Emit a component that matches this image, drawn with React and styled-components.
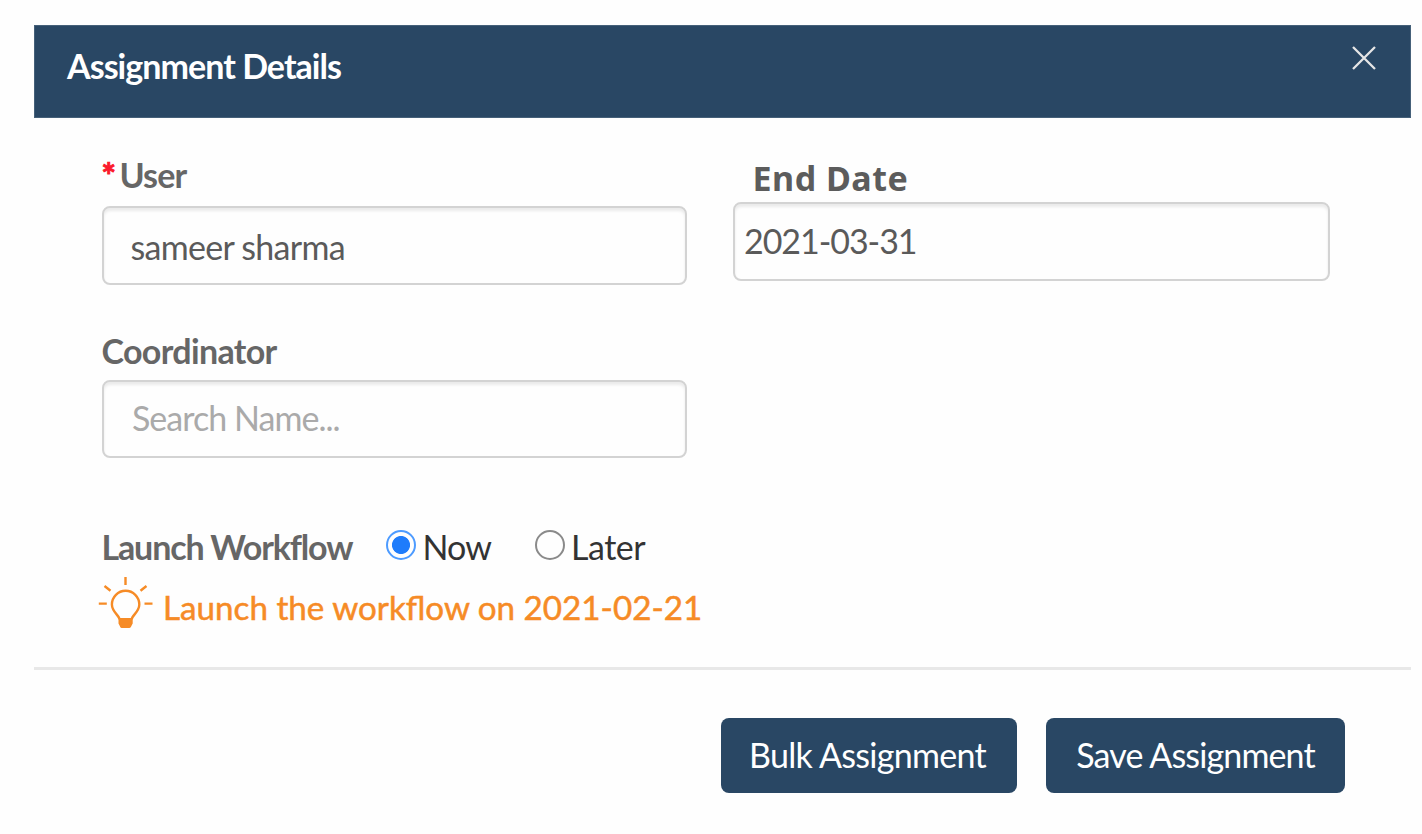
import React, { useState } from "react";
import styled, { createGlobalStyle } from "styled-components";

const GlobalStyle = createGlobalStyle`
  * { box-sizing: border-box; }
  body {
    margin: 0;
    background: #fefefe;
    font-family: Lato, "Open Sans", sans-serif;
    font-size: 34px;
    line-height: 40px;
    color: #333;
    overflow: hidden;
  }
`;

const Dialog = styled.section`
  width: 1377px;
  margin: 25px 0 0 34px;
`;

const Header = styled.header`
  display: flex;
  justify-content: space-between;
  align-items: flex-start;
  height: 93px;
  padding: 20px 34px 0 32px;
  background: #294764;
  border: 1px solid #456079;
  color: #fff;
`;

const Title = styled.h1`
  margin: 0;
  font-size: 34px;
  font-weight: 700;
  letter-spacing: ${(p) => p.$tracking}px;
`;

const CloseButton = styled.button`
  display: flex;
  padding: 0;
  border: 0;
  background: none;
  color: #e6e6e6;
`;

const Body = styled.div`
  display: flex;
  flex-direction: column;
  height: 549px;
  padding: 37px 81px 0 67.5px;
`;

const Columns = styled.div`
  display: flex;
  gap: 46px;
`;

const Column = styled.div`
  width: ${(p) => p.$width}px;
`;

const Label = styled.label`
  display: flex;
  height: 40px;
  color: #666;
  font-weight: 700;
  white-space: nowrap;
  letter-spacing: ${(p) => p.$tracking}px;
`;

const DateLabel = styled(Label)`
  height: 47px;
  padding: 3px 0 0 20px;
  font-family: "Noto Sans", sans-serif;
  color: #5c5c5c;
`;

const Required = styled.span`
  width: 18px;
  color: #fb1a2c;
  -webkit-text-stroke: 1px #fb1a2c;
`;

const Input = styled.input`
  display: block;
  width: 100%;
  height: ${(p) => p.$height || 79}px;
  margin-top: ${(p) => p.$gap || 0}px;
  padding: ${(p) => p.$pad};
  border: 2px solid #d3d3d3;
  border-radius: 8px;
  outline: 0;
  background: #fefefe;
  box-shadow: inset 0 3px 3px rgba(0, 0, 0, 0.08);
  color: #5a5a5a;
  font: 400 34px/40px Lato, sans-serif;
  letter-spacing: ${(p) => p.$tracking}px;
  &::placeholder { color: #aaa; opacity: 1; }
`;

const Spacer = styled.div`
  height: 46px;
`;

const LaunchRow = styled.div`
  display: flex;
  height: 40px;
  margin-top: 69px;
`;

const LaunchLabel = styled(Label)`
  width: 284.5px;
`;

const Choice = styled.label`
  display: flex;
  width: ${(p) => p.$width}px;
  letter-spacing: ${(p) => p.$tracking}px;
  white-space: nowrap;
`;

const Radio = styled.input`
  appearance: none;
  flex: none;
  width: 30px;
  height: 30px;
  margin: 3px 6.5px 0 0;
  border: 2px solid #8a8a8a;
  border-radius: 50%;
  background: #fefefe;
  &:checked {
    border-color: #4d9bff;
    background: radial-gradient(circle, #1f7cfb 8.6px, #fefefe 9.4px);
  }
`;

const Hint = styled.div`
  display: flex;
  height: 52px;
  margin-top: 10px;
  margin-left: -3.5px;
  color: #f68b26;
  white-space: nowrap;
`;

const HintText = styled.span`
  margin: 10px 0 0 10px;
  font-size: 33.2px;
  -webkit-text-stroke: 0.5px #f68b26;
`;

const Footer = styled.footer`
  display: flex;
  justify-content: flex-end;
  gap: 29px;
  padding: 48px 66px 0 0;
  border-top: 3px solid #e8e8e8;
`;

const Button = styled.button`
  width: ${(p) => p.$width}px;
  height: 75px;
  padding: 0 ${(p) => p.$shift || 0}px 1px 0;
  border: 0;
  border-radius: 8px;
  background: #294764;
  color: #fff;
  font: 400 34px/40px Lato, sans-serif;
  letter-spacing: ${(p) => p.$tracking}px;
  white-space: nowrap;
`;

const CloseIcon = () => (
  <svg width="24" height="24" viewBox="0 0 24 24" fill="none" stroke="currentColor" strokeWidth="2.3">
    <path d="M1 1 L23 23 M23 1 L1 23" />
  </svg>
);

const BulbIcon = () => (
  <svg width="55" height="52" viewBox="0 0 55 52" fill="none" stroke="currentColor" strokeWidth="2.4">
    <path d="M27.500 0v8M6.500 9l6 4.800M48.500 9l-6 4.800M.8 26.600h8M46.500 26.600h8" />
    <path d="M21.500 42.500c0-4-7.600-7.500-7.600-15a13.700 13.700 0 0 1 27.400 0c0 7.500-7.600 11-7.600 15" />
    <path d="M20.500 41h14.200v5.500l-1.200 2.200c-.8 2-1.600 2.400-3.500 2.400h-5c-1.900 0-2.700-.4-3.300-2.400l-1.200-2.200z" fill="currentColor" stroke="none" />
  </svg>
);

export default function App() {
  const [launch, setLaunch] = useState("now");
  return (
    <>
      <GlobalStyle />
      <Dialog>
        <Header>
          <Title $tracking={-0.96}>Assignment Details</Title>
          <CloseButton aria-label="Close"><CloseIcon /></CloseButton>
        </Header>
        <Body>
          <Columns>
            <Column $width={585}>
              <Label htmlFor="user" $tracking={-0.9}><Required>*</Required>User</Label>
              <Input id="user" defaultValue="sameer sharma" $gap={11} $pad="2px 27px 0" $tracking={-0.72} />
              <Spacer />
              <Label htmlFor="coordinator" $tracking={-0.65}>Coordinator</Label>
              <Input id="coordinator" placeholder="Search Name..." $height={78} $gap={9} $pad="0 28.5px 4px" $tracking={-0.97} />
            </Column>
            <Column $width={597}>
              <DateLabel htmlFor="end" $tracking={0.5}>End Date</DateLabel>
              <Input id="end" defaultValue="2021-03-31" $height={79} $pad="0 9.5px 2px" $tracking={-1.05} />
            </Column>
          </Columns>
          <LaunchRow>
            <LaunchLabel as="span" $tracking={-1.15}>Launch Workflow</LaunchLabel>
            <Choice $width={148.5} $tracking={-0.9}>
              <Radio type="radio" name="launch" checked={launch === "now"} onChange={() => setLaunch("now")} />
              Now
            </Choice>
            <Choice $width={120} $tracking={-0.5}>
              <Radio type="radio" name="launch" checked={launch === "later"} onChange={() => setLaunch("later")} />
              Later
            </Choice>
          </LaunchRow>
          <Hint>
            <BulbIcon />
            <HintText>Launch the workflow on 2021-02-21</HintText>
          </Hint>
        </Body>
        <Footer>
          <Button $width={296} $tracking={-0.7} $shift={3}>Bulk Assignment</Button>
          <Button $width={299} $tracking={-0.85}>Save Assignment</Button>
        </Footer>
      </Dialog>
    </>
  );
}
